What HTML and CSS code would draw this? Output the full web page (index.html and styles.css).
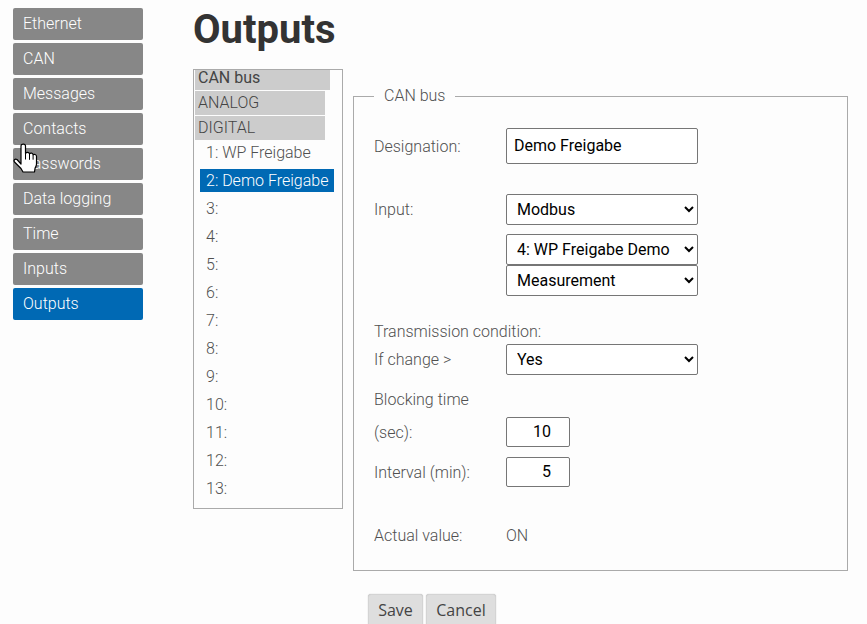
FILE: index.html
```html
<!doctype html>
<html>
  <head>
    <title>Outputs</title>
    <meta name="viewport" content="width=device-width, initial-scale=1">
    <link rel="stylesheet" href="styles.css">
  </head>
  <body>
    <nav class="menu">
      <a href="#">Ethernet</a>
      <a href="#">CAN</a>
      <a href="#">Messages</a>
      <a href="#">Contacts</a>
      <a href="#">Passwords</a>
      <a href="#">Data logging</a>
      <a href="#">Time</a>
      <a href="#">Inputs</a>
      <a href="#" class="active">Outputs</a>
    </nav>

    <!-- mouse pointer caught in the screenshot -->
    <svg class="pointer" width="26" height="34" viewBox="0 0 26 34">
      <path d="M8 3c0-2.600 4.500-2.600 4.500 0v7.500c1-1.500 3.500-1.500 4 .3 1-1.200 3.300-.9 3.600.9 1-.8 3.400-.4 3.400 1.600v7.700c0 2-1 3-1.500 4.500l-.5 3.500H10l-2-3.500-6.500-6.500c-1.200-1.500.3-3.700 2.500-2.500L8 21Z" fill="#fff" stroke="#000" stroke-width="1.200" stroke-linejoin="round"/>
      <path d="M12.500 10.500v6M16.500 10.800v6M20.100 11.700v5" stroke="#000" stroke-width="1" fill="none"/>
    </svg>

    <main class="content">
      <h1>Outputs</h1>
      <div class="columns">
        <div class="channels">
          <div class="group group-wide"><b>CAN bus</b></div>
          <div class="group">ANALOG</div>
          <div class="group">DIGITAL</div>
          <a href="#" class="channel">1: WP Freigabe</a>
          <a href="#" class="channel selected">2: Demo Freigabe</a>
          <a href="#" class="channel">3:</a>
          <a href="#" class="channel">4:</a>
          <a href="#" class="channel">5:</a>
          <a href="#" class="channel">6:</a>
          <a href="#" class="channel">7:</a>
          <a href="#" class="channel">8:</a>
          <a href="#" class="channel">9:</a>
          <a href="#" class="channel">10:</a>
          <a href="#" class="channel">11:</a>
          <a href="#" class="channel">12:</a>
          <a href="#" class="channel">13:</a>
        </div>

        <div class="panel">
          <fieldset>
            <legend>CAN bus</legend>

            <div class="row row-designation">
              <label>Designation:</label>
              <input class="text" type="text" value="Demo Freigabe">
            </div>

            <div class="row row-input">
              <label>Input:</label>
              <div class="selects">
                <select class="first"><option>Modbus</option></select>
                <select><option>4: WP Freigabe Demo</option></select>
                <select><option>Measurement</option></select>
              </div>
            </div>

            <div class="caption">Transmission condition:</div>
            <div class="row row-change">
              <label>If change &gt;</label>
              <select><option>Yes</option></select>
            </div>

            <div class="caption caption-blocking">Blocking time</div>
            <div class="row row-sec">
              <label>(sec):</label>
              <input class="num" type="text" value="10">
            </div>
            <div class="row row-min">
              <label>Interval (min):</label>
              <input class="num" type="text" value="5">
            </div>

            <div class="row row-actual">
              <label>Actual value:</label>
              <span>ON</span>
            </div>
          </fieldset>

          <div class="buttons">
            <button type="button" class="save">Save</button>
            <button type="button" class="cancel">Cancel</button>
          </div>
        </div>
      </div>
    </main>
  </body>
</html>
```

FILE: styles.css
```css
html, body {
    height: 100%;
    overflow: hidden;
}
body {
    display: flex;
    margin: 0;
    background: #fdfdfd;
    color: #505050;
    font-family: "Roboto", sans-serif;
    font-size: 16px;
    font-weight: 300;
}

/* left menu */
.menu {
    display: flex;
    flex-direction: column;
    gap: 3px;
    flex: none;
    width: 130px;
    margin: 8px 50px 0 13px;
}
.menu a {
    display: block;
    height: 32px;
    padding-left: 10px;
    border-radius: 2px;
    background: #878787;
    color: #fff;
    line-height: 31px;
    text-decoration: none;
}
.menu a.active {
    background: #0069b4;
}
.pointer {
    position: absolute;
    top: 143px;
    left: 13px;
}

.content {
    flex: 1;
}
h1 {
    height: 69px;
    margin: 0;
    color: #333;
    font-size: 40px;
    font-weight: 700;
    line-height: 59px;
}
.columns {
    display: flex;
    align-items: flex-start;
    gap: 10px;
}

/* channel list */
.channels {
    box-sizing: border-box;
    display: flex;
    flex-direction: column;
    flex: none;
    width: 150px;
    height: 440px;
    padding: 0 1px;
    border: 1px solid #aaa;
}
.group {
    box-sizing: border-box;
    width: 130px;
    height: 24px;
    margin-bottom: 1px;
    padding-left: 3px;
    background: #ccc;
    color: #444;
    line-height: 24px;
}
.group b {
    font-weight: 400;
}
.group-wide {
    width: 135px;
    height: 20px;
    line-height: 16px;
}
.channel {
    box-sizing: border-box;
    height: 28px;
    padding-left: 11px;
    color: #505050;
    line-height: 24px;
    text-decoration: none;
}
.channel.selected {
    width: 134px;
    height: 23px;
    margin: 0 0 5px 5px;
    padding-left: 6px;
    background: #0069b4;
    color: #fff;
    line-height: 23px;
}

/* form */
.panel {
    flex: none;
    width: 495px;
    padding-top: 17px;
}
fieldset {
    box-sizing: border-box;
    height: 485px;
    margin: 0;
    padding: 0 20px;
    border: 1px solid #aaa;
}
legend {
    margin-left: 0;
    padding: 0 10px;
    line-height: 20px;
}
.row {
    display: flex;
    align-items: center;
}
.row label {
    flex: none;
    width: 132px;
}
.caption {
    line-height: 20px;
}
.selects {
    display: flex;
    flex-direction: column;
}
input, select {
    box-sizing: border-box;
    border: 1px solid #767676;
    border-radius: 2px;
    background: #fff;
    color: #000;
    font-family: "Roboto", sans-serif;
    font-size: 16px;
    font-weight: 400;
}
select {
    width: 192px;
    height: 31px;
    padding-left: 6px;
}
.text {
    width: 192px;
    height: 36px;
    padding: 0 7px 2px;
}
.num {
    width: 64px;
    height: 30px;
    padding: 0 18px 2px;
    text-align: right;
}
.row-designation {
    margin-top: 22px;
}
.row-input {
    align-items: flex-start;
    margin-top: 30px;
}
.row-input label {
    line-height: 31px;
}
.selects .first {
    margin-bottom: 9px;
}
.caption {
    margin-top: 26px;
}
.row-change {
    margin-top: 2px;
}
.caption-blocking {
    margin-top: 15px;
}
.row-sec {
    margin-top: 7px;
}
.row-min {
    margin-top: 10px;
}
.row-actual {
    margin-top: 39px;
}

.buttons {
    display: flex;
    gap: 3px;
    margin: 23px 0 0 15px;
}
button {
    height: 40px;
    padding: 0 0 9px;
    border: 1px solid #d4d4d4;
    border-radius: 3px;
    background: #dedede;
    color: #444;
    font-family: "Open Sans", sans-serif;
    font-size: 16px;
    box-shadow: 0 0 1px #aaa;
}
.save {
    width: 55px;
}
.cancel {
    width: 70px;
}
```
